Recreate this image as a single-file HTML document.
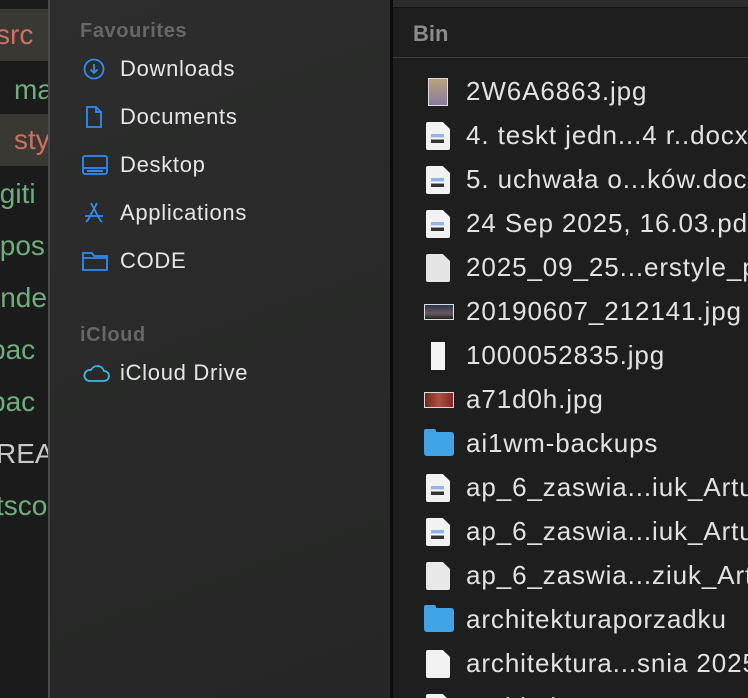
<!DOCTYPE html>
<html><head><meta charset="utf-8"><style>
*{margin:0;padding:0;box-sizing:border-box}
html,body{width:748px;height:698px;overflow:hidden}
body{background:#1e1e1e;font-family:"Liberation Sans",sans-serif;position:relative}
.strip{position:absolute;left:0;top:0;width:48px;height:698px;background:#1b1b1b;overflow:hidden}
.strip div{position:absolute;white-space:nowrap;font-size:28px;line-height:52px;color:#6fae7c}
.hl{position:absolute;left:0;width:48px;height:52px;background:#3a3833}
.sep1{position:absolute;left:48px;top:0;width:2px;height:698px;background:#4a4a4a}
.side{position:absolute;left:50px;top:0;width:340px;height:698px;background:linear-gradient(160deg,#2c2d2c,#252625)}
.side .h{position:absolute;left:30px;font-size:20px;letter-spacing:0.6px;font-weight:bold;color:#676767}
.side .it{position:absolute;left:70px;font-size:22px;letter-spacing:0.7px;color:#e6e6e6;line-height:24px}
.side svg{position:absolute;left:-38px;top:0}
.sep2{position:absolute;left:390px;top:0;width:3px;height:698px;background:#0c0c0c}
.main{position:absolute;left:393px;top:0;width:355px;height:698px;background:#1e1e1e;overflow:hidden}
.top{position:absolute;left:0;top:0;width:355px;height:8px;background:#2c2c2c;border-bottom:1px solid #111}
.bin{position:absolute;left:20px;top:21px;font-size:22px;font-weight:bold;color:#8c8c8c}
.line{position:absolute;left:0;top:57px;width:355px;height:1px;background:#3a3a3a}
.row{position:absolute;left:73px;font-size:26px;letter-spacing:0.9px;color:#e2e2e2;white-space:nowrap;line-height:26px}
.ic{position:absolute;left:-40px;top:0px}
.doc{width:24px;height:28px;background:#f2f2f2;border-radius:2px;clip-path:polygon(0 0,70% 0,100% 25%,100% 100%,0 100%)}
.doc i{position:absolute;left:5px;top:12px;width:13px;height:9px;background:linear-gradient(#8fb4f0 40%,#fff 40%,#fff 60%,#333 60%)}
.fold{width:30px;height:24px;background:#3fa4e6;border-radius:3px;top:2px;left:-42px}
.fold:before{content:"";position:absolute;left:0;top:-3px;width:12px;height:5px;background:#3fa4e6;border-radius:2px 2px 0 0}
.pic{width:30px;height:16px;top:6px;left:-42px;border:1px solid #ddd}
</style></head><body>
<div class="strip">
<div class="hl" style="top:9px"></div>
<div class="hl" style="top:114px"></div>
<div style="left:-4px;top:9px;color:#d0715f">src</div>
<div style="left:14px;top:64px">ma</div>
<div style="left:14px;top:114px;color:#d0715f">sty</div>
<div style="left:-8px;top:168px">.giti</div>
<div style="left:-8px;top:220px">.pos</div>
<div style="left:-6px;top:272px">inde</div>
<div style="left:-10px;top:324px">pac</div>
<div style="left:-10px;top:376px">pac</div>
<div style="left:-4px;top:428px;color:#c8c8c8">REA</div>
<div style="left:-4px;top:480px">tsco</div>
</div>
<div class="sep1"></div>
<div class="side">
<div class="h" style="top:20px">Favourites</div>
<div class="it" style="top:57px"><svg width="24" height="24" viewBox="0 0 24 24" fill="none" stroke="#2f8cf5" stroke-width="1.8"><circle cx="12" cy="12" r="9.5"/><path d="M12 7v9M8.5 12.5L12 16l3.5-3.5"/></svg>Downloads</div>
<div class="it" style="top:105px"><svg width="24" height="24" viewBox="0 0 24 24" fill="none" stroke="#2f8cf5" stroke-width="1.8"><path d="M5 2h9l5 5v15H5z M14 2v5h5"/></svg>Documents</div>
<div class="it" style="top:153px"><svg width="26" height="24" viewBox="0 0 26 24" fill="none" stroke="#2f8cf5" stroke-width="1.8"><rect x="1" y="3" width="24" height="18" rx="2"/><path d="M1 15h24" /><rect x="5" y="17" width="16" height="2" fill="#2f8cf5" stroke="none"/></svg>Desktop</div>
<div class="it" style="top:201px"><svg width="24" height="24" viewBox="0 0 24 24" fill="none" stroke="#2f8cf5" stroke-width="1.8"><path d="M9 2l9 17M15 2L6 19M3 15h18M4 21l2-2M20 21l-2-2"/></svg>Applications</div>
<div class="it" style="top:249px"><svg width="26" height="24" viewBox="0 0 26 24" fill="none" stroke="#2f8cf5" stroke-width="1.8"><path d="M1 4h9l2 3h13v14H1z M1 9h24"/></svg>CODE</div>
<div class="h" style="top:324px">iCloud</div>
<div class="it" style="top:361px"><svg width="28" height="24" viewBox="0 0 28 24" fill="none" stroke="#3bb8e6" stroke-width="1.8"><path d="M7 20h15a5 5 0 0 0 0-10 7 7 0 0 0-13-1 5.5 5.5 0 0 0-2 11z"/></svg>iCloud Drive</div>
</div>
<div class="sep2"></div>
<div class="main">
<div class="top"></div>
<div class="bin">Bin</div>
<div class="line"></div>
<div class="row" style="top:78px"><span class="ic" style="width:20px;height:28px;background:linear-gradient(#b9a27c,#8a7aa0);border:1px solid #ddd;left:-38px"></span>2W6A6863.jpg</div>
<div class="row" style="top:122px"><span class="ic doc"><i></i></span>4. teskt jedn...4 r..docx.</div>
<div class="row" style="top:166px"><span class="ic doc"><i></i></span>5. uchwała o...ków.docx</div>
<div class="row" style="top:210px"><span class="ic doc"><i></i></span>24 Sep 2025, 16.03.pdf</div>
<div class="row" style="top:254px"><span class="ic doc" style="background:#e4e4e4"></span>2025_09_25...erstyle_p</div>
<div class="row" style="top:298px"><span class="ic pic" style="background:linear-gradient(#2a3550,#6a5a60 60%,#222)"></span>20190607_212141.jpg</div>
<div class="row" style="top:342px"><span class="ic" style="width:14px;height:28px;background:#f4f4f4;left:-35px"></span>1000052835.jpg</div>
<div class="row" style="top:386px"><span class="ic pic" style="background:linear-gradient(90deg,#6a2a20,#b05040,#7a2a20)"></span>a71d0h.jpg</div>
<div class="row" style="top:430px"><span class="ic fold"></span>ai1wm-backups</div>
<div class="row" style="top:474px"><span class="ic doc"><i></i></span>ap_6_zaswia...iuk_Artur</div>
<div class="row" style="top:518px"><span class="ic doc"><i></i></span>ap_6_zaswia...iuk_Artur</div>
<div class="row" style="top:562px"><span class="ic doc" style="background:#e8e8e8"></span>ap_6_zaswia...ziuk_Artu</div>
<div class="row" style="top:606px"><span class="ic fold"></span>architekturaporzadku</div>
<div class="row" style="top:650px"><span class="ic doc"></span>architektura...snia 2025</div>
<div class="row" style="top:694px"><span class="ic doc"></span>architektura</div>
</div>
</body></html>
